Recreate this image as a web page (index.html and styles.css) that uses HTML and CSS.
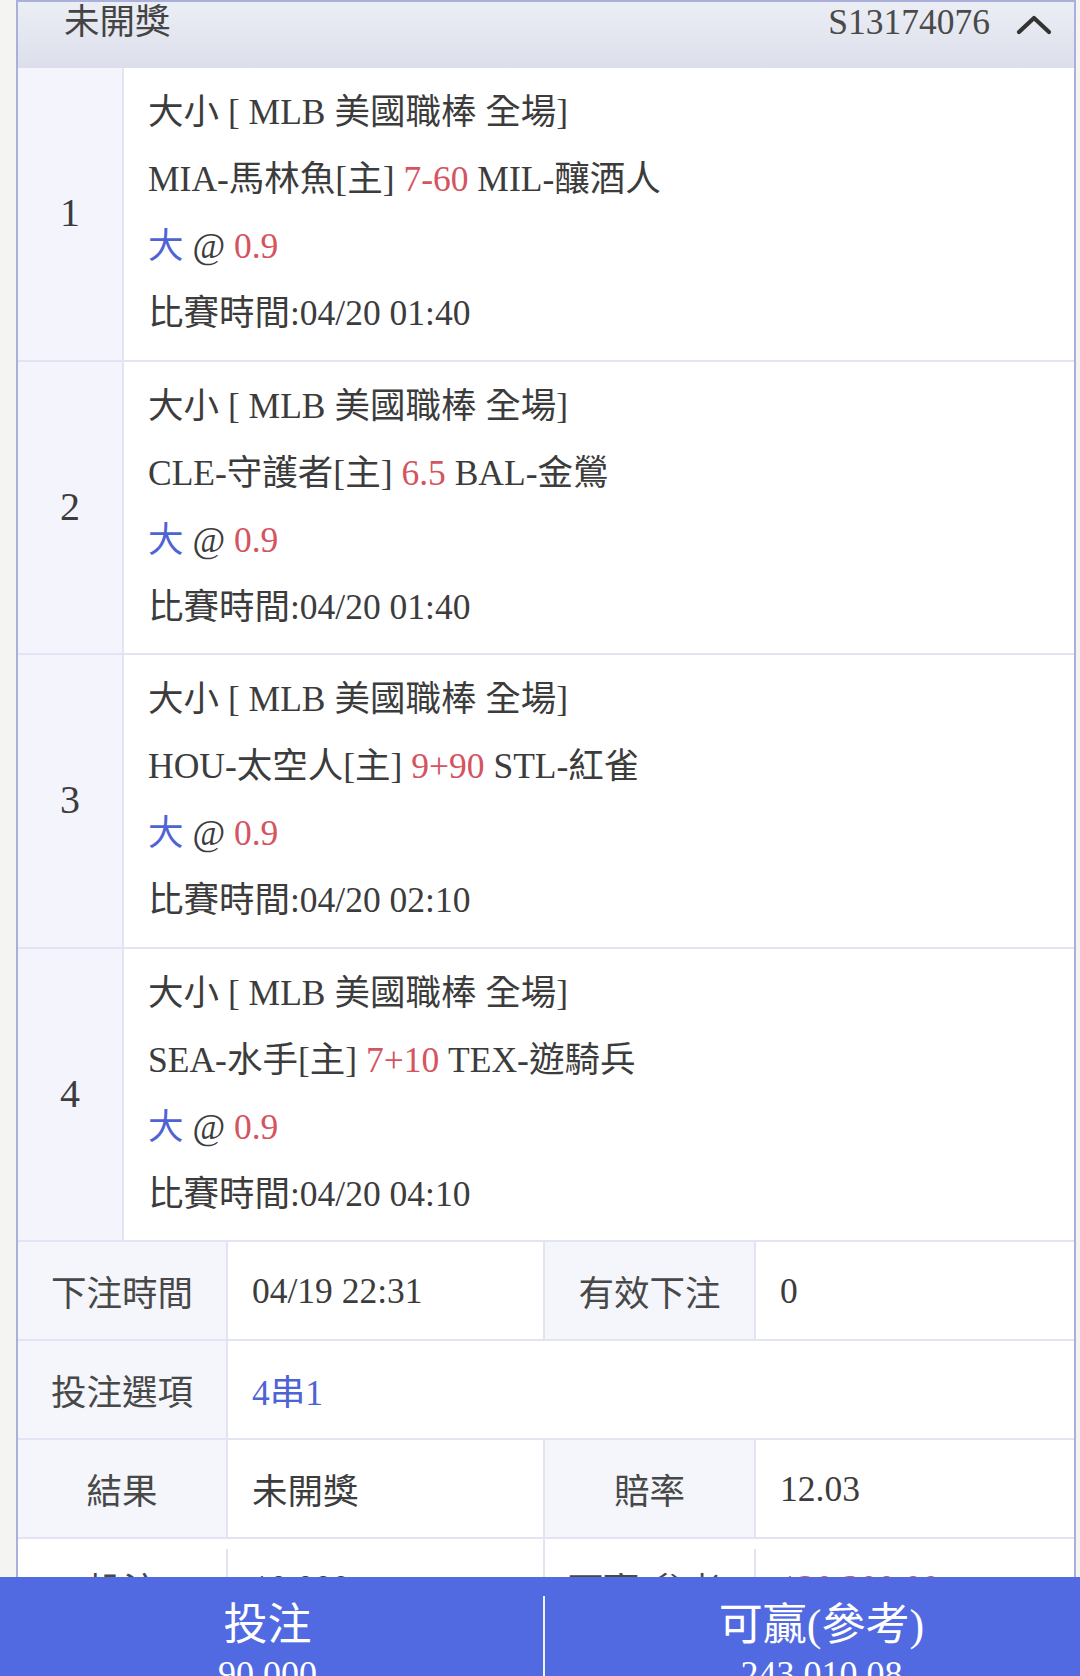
FILE: index.html
```html
<!DOCTYPE html>
<html lang="zh-Hant">
<head>
<meta charset="utf-8">
<title>注單</title>
<link rel="stylesheet" href="styles.css">
</head>
<body>
<div class="panel">
  <div class="panel-head">
    <span class="status">未開獎</span>
    <span class="head-right">
      <span class="order-no">S13174076</span>
      <svg class="chev" width="36" height="20" viewBox="0 0 36 20"><polyline points="3,17 18,3 33,17" fill="none" stroke="#333" stroke-width="4.2" stroke-linecap="round" stroke-linejoin="round"/></svg>
    </span>
  </div>

  <div class="bet">
    <div class="bet-idx">1</div>
    <div class="bet-body">
      <p>大小 [ MLB 美國職棒 全場]</p>
      <p>MIA-馬林魚[主] <span class="red">7-60</span> MIL-釀酒人</p>
      <p><span class="blue">大</span> @ <span class="red">0.9</span></p>
      <p>比賽時間:04/20 01:40</p>
    </div>
  </div>
  <div class="bet">
    <div class="bet-idx">2</div>
    <div class="bet-body">
      <p>大小 [ MLB 美國職棒 全場]</p>
      <p>CLE-守護者[主] <span class="red">6.5</span> BAL-金鶯</p>
      <p><span class="blue">大</span> @ <span class="red">0.9</span></p>
      <p>比賽時間:04/20 01:40</p>
    </div>
  </div>
  <div class="bet">
    <div class="bet-idx">3</div>
    <div class="bet-body">
      <p>大小 [ MLB 美國職棒 全場]</p>
      <p>HOU-太空人[主] <span class="red">9+90</span> STL-紅雀</p>
      <p><span class="blue">大</span> @ <span class="red">0.9</span></p>
      <p>比賽時間:04/20 02:10</p>
    </div>
  </div>
  <div class="bet">
    <div class="bet-idx">4</div>
    <div class="bet-body">
      <p>大小 [ MLB 美國職棒 全場]</p>
      <p>SEA-水手[主] <span class="red">7+10</span> TEX-遊騎兵</p>
      <p><span class="blue">大</span> @ <span class="red">0.9</span></p>
      <p>比賽時間:04/20 04:10</p>
    </div>
  </div>

  <div class="summary">
    <div class="srow">
      <div class="lbl">下注時間</div>
      <div class="val">04/19 22:31</div>
      <div class="lbl">有效下注</div>
      <div class="val last">0</div>
    </div>
    <div class="srow">
      <div class="lbl">投注選項</div>
      <div class="val wide last"><span class="blue">4串1</span></div>
    </div>
    <div class="srow">
      <div class="lbl">結果</div>
      <div class="val">未開獎</div>
      <div class="lbl">賠率</div>
      <div class="val last">12.03</div>
    </div>
    <div class="srow plain">
      <div class="lbl">投注</div>
      <div class="val">10,000</div>
      <div class="lbl">可贏(參考)</div>
      <div class="val last"><span class="red">120,300.00</span></div>
    </div>
  </div>
</div>

<div class="footbar">
  <div class="foot-cell left">
    <div class="foot-title">投注</div>
    <div class="foot-amt">90,000</div>
  </div>
  <div class="foot-cell divided">
    <div class="foot-title">可贏(參考)</div>
    <div class="foot-amt">243,010.08</div>
  </div>
</div>
</body>
</html>
```

FILE: styles.css
```css
* { box-sizing: border-box; }

html, body {
  margin: 0;
  padding: 0;
}

body {
  background: #f4f4f3;
  font-family: "Liberation Serif", "Noto Sans CJK TC", serif;
  color: #3c3c3c;
  height: 1676px;
  overflow: hidden;
}

p { margin: 0; }

.red { color: #d4545f; }
.blue { color: #4e63d4; }

.panel {
  margin-left: 16px;
  width: 1060px;
  border-left: 2px solid #abafdc;
  border-right: 2px solid #abafdc;
  border-top: 2px solid #abafdc;
  background: #fff;
}

.panel-head {
  height: 66px;
  display: flex;
  justify-content: space-between;
  align-items: flex-start;
  padding: 0 22px 0 46px;
  background: linear-gradient(#eceef5, #dcdfeb);
  font-size: 35.5px;
  line-height: 40px;
  color: #444;
}

.head-right {
  display: flex;
  align-items: center;
  height: 40px;
}

.order-no {
  margin-right: 26px;
  color: #4a4a4a;
}

.chev {
  display: block;
  margin-top: 6px;
}

.bet {
  display: grid;
  grid-template-columns: 106px 1fr;
  border-bottom: 2px solid #e2e4f3;
}

.bet-idx {
  background: #f4f5fc;
  border-right: 2px solid #e2e4f3;
  display: flex;
  align-items: center;
  justify-content: center;
  font-size: 40px;
  color: #3c3c3c;
  padding-bottom: 2px;
}

.bet-body {
  padding: 11px 20px 12.5px 24px;
  font-size: 35.5px;
  line-height: 67px;
}

.summary {
  font-size: 35.5px;
}

.srow {
  display: grid;
  grid-template-columns: 210px 317px 211px 1fr;
  height: 99px;
  border-bottom: 2px solid #e2e4f3;
}

.lbl {
  background: #f5f6fb;
  border-right: 2px solid #e2e4f3;
  display: flex;
  align-items: center;
  justify-content: center;
  color: #484848;
}

.val {
  background: #fff;
  border-right: 2px solid #e2e4f3;
  display: flex;
  align-items: center;
  padding-left: 24px;
}

.val.last { border-right: none; }
.val.wide { grid-column: span 3; }

.srow.plain .lbl {
  background: #fff;
  border-right: none;
}

.srow.plain .val {
  position: relative;
}

.srow.plain .val::before {
  content: "";
  position: absolute;
  left: -2px;
  top: 10px;
  bottom: 0;
  width: 2px;
  background: #e2e4f3;
}

.footbar {
  position: fixed;
  left: 0;
  bottom: 0;
  width: 1080px;
  height: 99px;
  background: #516ae2;
  display: flex;
  color: #fff;
  overflow: hidden;
}

.foot-cell {
  flex: 1;
  display: flex;
  flex-direction: column;
  align-items: center;
  padding-top: 23px;
}

.foot-cell.left {
  flex: 0 0 543px;
  padding-right: 8px;
}

.foot-cell.divided {
  border-left: 2px solid rgba(255, 255, 255, 0.9);
  margin-top: 19px;
  padding-top: 4px;
  padding-left: 18px;
}

.foot-title {
  font-size: 44px;
  line-height: 52px;
}

.foot-amt {
  font-size: 36px;
  line-height: 44px;
}
```
